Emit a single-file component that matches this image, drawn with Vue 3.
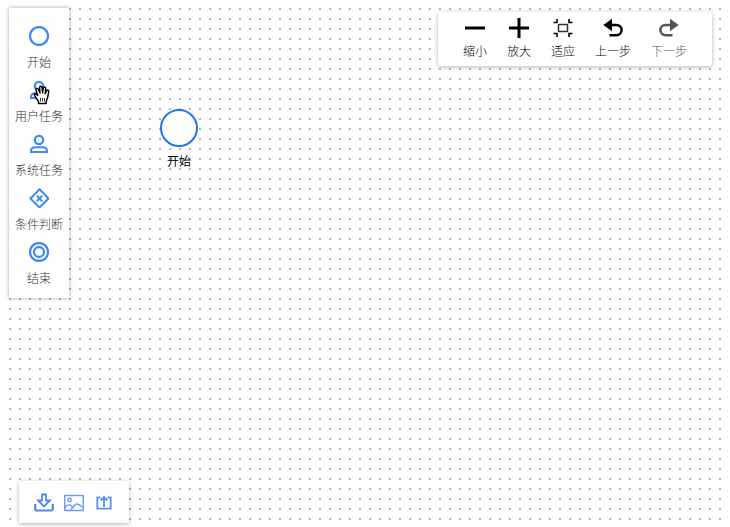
<template>
    <div class="flow-page">
        <div class="canvas">
            <div v-for="node in nodes" :key="node.id" class="node" :style="{ left: node.x + 'px', top: node.y + 'px' }">
                <svg class="node-shape" viewBox="0 0 38 38">
                    <circle cx="19" cy="19" r="18" fill="#fff" stroke="#1f78ea" stroke-width="2" />
                </svg>
                <span class="node-text">{{ node.text }}</span>
            </div>
        </div>

        <!-- Drag panel -->
        <div class="dnd-panel">
            <button v-for="item in panelItems" :key="item.text" type="button" class="dnd-item">
                <svg class="dnd-icon" viewBox="0 0 20 20" fill="none" stroke="#3f8bf5" stroke-width="2.3">
                    <circle v-if="item.type === 'start'" cx="10" cy="10" r="9" />
                    <template v-else-if="item.type === 'user'">
                        <circle cx="10" cy="6" r="4.2" />
                        <path d="M2 18v-1c0-2.500 2-3.800 4.500-3.800h7c2.500 0 4.500 1.300 4.500 3.800v1z" stroke-width="2" />
                    </template>
                    <template v-else-if="item.type === 'condition'">
                        <path d="M10.500 1.300l9 9.200-9 9-9-9z" stroke-width="2" stroke-linejoin="round" />
                        <path d="M7.800 7.800l5.400 5.400M13.200 7.800l-5.400 5.400" stroke-width="2" />
                    </template>
                    <template v-else>
                        <circle cx="10" cy="10" r="9" />
                        <circle cx="10" cy="10" r="5" />
                    </template>
                </svg>
                <span>{{ item.text }}</span>
            </button>
        </div>

        <!-- Zoom and history -->
        <div class="control">
            <button v-for="item in controls" :key="item.type" type="button" class="control-item" :disabled="item.disabled">
                <svg class="control-icon" viewBox="0 0 20 20" fill="none" stroke="currentColor">
                    <path v-if="item.type === 'zoom-out'" d="M0 10h20" stroke-width="3" />
                    <path v-else-if="item.type === 'zoom-in'" d="M0 10h20M10 0v20" stroke-width="3" />
                    <template v-else-if="item.type === 'fit'">
                        <rect x="5.500" y="6.500" width="9" height="7" rx="0.500" stroke="#333" stroke-width="1.500" />
                        <path d="M0.500 4.500h3.500V1M19.500 4.500H16V1M0.500 15.500h3.500V19M19.500 15.500H16V19" stroke-width="1.600" />
                    </template>
                    <g v-else :transform="item.type === 'redo' ? 'translate(20 0) scale(-1 1)' : undefined">
                        <path d="M7 7h6.500a5 5 0 0 1 0 10.200H6.500" stroke-width="2.500" />
                        <path d="M0.300 7L9 0.800v12.400z" fill="currentColor" stroke="none" />
                    </g>
                </svg>
                <span>{{ item.text }}</span>
            </button>
        </div>

        <!-- Data actions -->
        <div class="data-bar">
            <button type="button" class="data-btn" aria-label="下载">
                <svg viewBox="0 0 20 20" fill="none" stroke="#4f86f2" stroke-width="1.800">
                    <path d="M8 1.500h4v6h4L10 13.500 4 7.500h4z" />
                    <path d="M1.200 11v5a1.500 1.500 0 0 0 1.500 1.500h14.600a1.500 1.500 0 0 0 1.500-1.500V11" stroke-width="2.200" />
                </svg>
            </button>
            <button type="button" class="data-btn" aria-label="图片">
                <svg viewBox="0 0 20 20" fill="none" stroke="#6f9cf5" stroke-width="1.500">
                    <rect x="0.700" y="2.500" width="18.600" height="15" rx="0.500" />
                    <circle cx="5.500" cy="7" r="1.700" />
                    <path d="M1 14.500c2-2.500 4.500-4 6.500-1.500l2 2M7 17c2-4 5-7 7.500-5.500 2 1 3 2 4.500 3" />
                </svg>
            </button>
            <button type="button" class="data-btn" aria-label="上传">
                <svg viewBox="0 0 20 20" fill="none" stroke="#5b8ff2" stroke-width="1.800">
                    <path d="M6.500 4.500H3.300v11.200h13.400V4.500h-3.200M10 14V4.500M6.500 7.500L10 4l3.500 3.500" />
                </svg>
            </button>
        </div>

        <!-- Hand pointer -->
        <svg class="hand" viewBox="0 0 18 20" aria-hidden="true">
            <path d="M5.500 18.500v-2L2.500 12C1 10 1 9 2 8.700c1-.2 1.700.5 2.700 1.800L3 5c-.4-1.600 1.500-2.300 2.200-.8L7 8 6.600 2.500C6.600.8 8.800.8 9 2.500l.6 5.300.8-4.800c.4-1.500 2.400-1.200 2.300.5l-.5 5.300 1.500-3c.8-1.400 2.500-.6 2 1L14.500 13l-1.300 3.500v2z" fill="#fff" stroke="#000" stroke-width="1.400" stroke-linejoin="round" />
            <path d="M7.500 13v3.500M9.500 13v3.500M11.500 13v3.500" stroke="#000" stroke-width="0.800" />
        </svg>
    </div>
</template>

<script setup>
import { ref } from 'vue';

const nodes = ref([
    { id: 1, text: '开始', x: 152, y: 109 },
]);

const panelItems = [
    { type: 'start', text: '开始' },
    { type: 'user', text: '用户任务' },
    { type: 'user', text: '系统任务' },
    { type: 'condition', text: '条件判断' },
    { type: 'end', text: '结束' },
];

const controls = ref([
    { type: 'zoom-out', text: '缩小', disabled: false },
    { type: 'zoom-in', text: '放大', disabled: false },
    { type: 'fit', text: '适应', disabled: false },
    { type: 'undo', text: '上一步', disabled: false },
    { type: 'redo', text: '下一步', disabled: true },
]);
</script>

<style>
body {
    margin: 0;
    background: #fefefe;
}
</style>

<style scoped>
.flow-page {
    position: relative;
    box-sizing: border-box;
    height: 100vh;
    padding: 0 8px;
    overflow: hidden;
    font-family: "Liberation Sans", "Noto Sans CJK SC", sans-serif;
    font-size: 12px;
    font-weight: 300;
    line-height: 18px;
}

button {
    padding: 0;
    border: none;
    background: none;
    font: inherit;
    color: inherit;
    cursor: pointer;
}

svg {
    display: block;
}

/* Dotted grid */
.canvas {
    position: relative;
    height: 100%;
    background-image: radial-gradient(circle at 2px 9px, #acacac 0, #bcbcbc 1px, transparent 1px);
    background-size: 10px 10px;
}

.node {
    position: absolute;
    display: flex;
    flex-direction: column;
    align-items: center;
    gap: 6px;
    color: #000;
}

.node-text {
    font-weight: 400;
}

.node-shape {
    width: 38px;
    height: 38px;
}

/* Left panel */
.dnd-panel {
    position: absolute;
    top: 8px;
    left: 9px;
    display: flex;
    flex-direction: column;
    gap: 3px;
    padding: 13px 6px 10px;
    background: rgba(255, 255, 255, 0.9);
    box-shadow: 0 0 4px rgba(0, 0, 0, 0.35);
    color: #333;
}

.dnd-item {
    display: flex;
    flex-direction: column;
    align-items: center;
    gap: 3px;
    cursor: grab;
}

.dnd-icon {
    width: 20px;
    height: 20px;
    padding: 5px;
}

/* Top right toolbar */
.control {
    position: absolute;
    top: 12px;
    right: 18px;
    display: flex;
    padding: 6px 15px 5px;
    background: rgba(255, 255, 255, 0.9);
    border-radius: 4px;
    box-shadow: 0 1px 4px rgba(0, 0, 0, 0.3);
    color: #000;
}

.control-item {
    display: flex;
    flex-direction: column;
    align-items: center;
    gap: 5px;
    padding: 0 10px;
}

.control-item:disabled {
    color: #555;
    cursor: default;
}

.control-icon {
    width: 20px;
    height: 20px;
}

/* Bottom left bar */
.data-bar {
    position: absolute;
    bottom: 4px;
    left: 19px;
    display: flex;
    gap: 10px;
    padding: 12px 15px 10px;
    background: rgba(255, 255, 255, 0.95);
    box-shadow: 0 1px 4px rgba(0, 0, 0, 0.3);
}

.data-btn svg {
    width: 20px;
    height: 20px;
}

.hand {
    position: absolute;
    top: 85px;
    left: 33px;
    width: 18px;
    height: 20px;
    pointer-events: none;
}
</style>
